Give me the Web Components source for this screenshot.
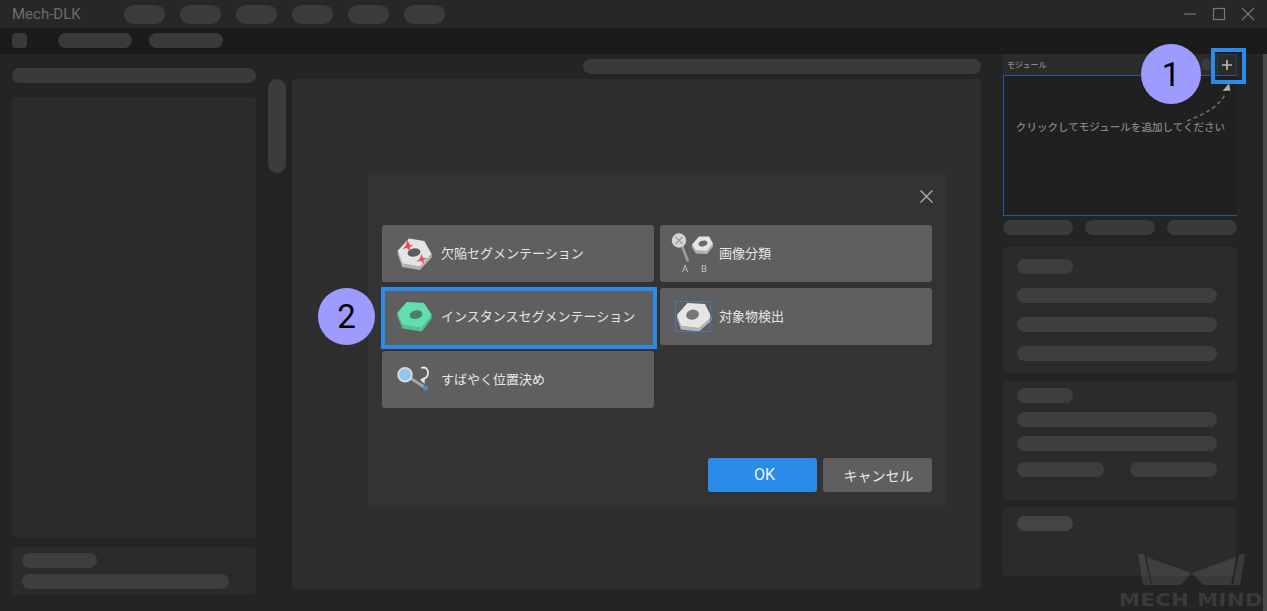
<!DOCTYPE html>
<html lang="ja">
<head>
<meta charset="utf-8">
<title>Mech-DLK</title>
<style>
    html, body {
        margin: 0;
        height: 100%;
        background: #242424;
        overflow: hidden;
        font-family: Roboto, "Noto Sans CJK JP", sans-serif;
    }
</style>
</head>
<body>
<app-shell></app-shell>
<script>
// top face of a hex nut + its extruded side, coordinates local to a 59x57 icon box
function nutSvg(pts, hole, top, side, holeFill, drop) {
    const p = pts.map(a => a.join(',')).join(' ');
    const low = pts.slice(0, 1).concat(pts.slice(4, 6).reverse(), pts.slice(3, 4));
    const lowPts = low.map(a => a.join(',')).join(' ');
    const lowDrop = low.slice().reverse().map(a => a[0] + ',' + (a[1] + drop)).join(' ');
    return `
        <polygon points="${lowPts} ${lowDrop}" fill="${side}"/>
        <polygon points="${p}" fill="${top}"/>
        <ellipse cx="${hole[0]}" cy="${hole[1]}" rx="${hole[2]}" ry="${hole[3]}" transform="rotate(-12 ${hole[0]} ${hole[1]})" fill="${holeFill}"/>
    `;
}

const ICONS = {
    defect: `<svg viewBox="0 0 59 57" width="59" height="57">
        ${nutSvg([[15.7,25.7],[27,13.5],[42.3,16],[49.7,29],[38,41.5],[20.3,38.5]], [32,27.5,6.5,4.2], '#e4e4e4', '#b4b4b4', '#5c5c5c', 3.5)}
        <path d="M25.5 15l2 4.500 3.500 1-3 1.500-.5 4-2.500-3-4.500 1 3-3z" fill="#e2525b"/>
        <path d="M39.500 28.500l1 4 4.500 1-3.500 1.500 .5 4-3-3-4.500 .5 3.500-3z" fill="#e2525b"/>
    </svg>`,
    classify: `<svg viewBox="0 0 59 57" width="59" height="57">
        <line x1="22" y1="21" x2="27.700" y2="35.500" stroke="#9a9a9a" stroke-width="2.800" stroke-linecap="round"/>
        <circle cx="19" cy="15.500" r="7.200" fill="#d4d4d4"/>
        <path d="M15.500 12l7 7m0-7l-7 7" stroke="#9b9b9b" stroke-width="1.200"/>
        ${nutSvg([[32,19.5],[39,11.5],[49,11.5],[53,18.5],[47,26],[36,25.5]], [43,18.500,4.500,2.800], '#e4e4e4', '#b2b2b2', '#6a6a6a', 3)}
        <text x="25" y="46.500" font-size="9.500" fill="#c4c4c4" text-anchor="middle" font-family="Roboto">A</text>
        <text x="44" y="46.500" font-size="9.500" fill="#c4c4c4" text-anchor="middle" font-family="Roboto">B</text>
    </svg>`,
    instance: `<svg viewBox="0 0 59 57" width="59" height="57">
        ${nutSvg([[15.3,24.7],[24.7,14],[42,15],[49.7,26.7],[39.7,40],[20.7,37]], [34,26.7,6.5,4.2], '#62dfae', '#4fc496', '#4b7e6a', 3.5)}
    </svg>`,
    detect: `<svg viewBox="0 0 59 57" width="59" height="57">
        ${nutSvg([[17,26.7],[27.5,15],[45,16],[51.5,29],[39,40],[21,38]], [32.5,26.7,6.500,5], '#e6e6e6', '#b4b4b4', '#777', 3.5)}
        <rect x="15.500" y="13.500" width="35" height="30" fill="none" stroke="#3f7ab8" stroke-width="1"/>
    </svg>`,
    locate: `<svg viewBox="0 0 59 57" width="59" height="57">
        <line x1="28" y1="27" x2="43" y2="36.500" stroke="#a6a6a6" stroke-width="3" stroke-linecap="round"/>
        <circle cx="43.500" cy="37" r="2.500" fill="#3f8fd4"/>
        <circle cx="23" cy="23.700" r="6.800" fill="#8fc6ef" stroke="#dcdcdc" stroke-width="1.800"/>
        <path d="M39 17c4-1.500 7 .5 7 5 0 3-2 5-4 6" fill="none" stroke="#e6e6e6" stroke-width="1.800"/>
        <path d="M38 28.500l5-2.500-.5 7z" fill="#e6e6e6"/>
    </svg>`
};

class XPill extends HTMLElement {
    constructor() {
        super();
        this.attachShadow({ mode: 'open' });
        this.shadowRoot.innerHTML = `
            <style>
                :host {
                    display: block;
                    flex: none;
                    height: 15px;
                    border-radius: 8px;
                    background: var(--pill, #3a3a3a);
                }
            </style>
        `;
    }
}

class XPanel extends HTMLElement {
    constructor() {
        super();
        this.attachShadow({ mode: 'open' });
        this.shadowRoot.innerHTML = `
            <style>
                :host {
                    display: flex;
                    flex-direction: column;
                    box-sizing: border-box;
                    background: #2b2b2b;
                    border-radius: 4px;
                    --pill: #3e3e3e;
                }
            </style>
            <slot></slot>
        `;
    }
}

class TitleBar extends HTMLElement {
    constructor() {
        super();
        this.attachShadow({ mode: 'open' });
        const menus = Array(6).fill('<x-pill class="menu"></x-pill>').join('');
        this.shadowRoot.innerHTML = `
            <style>
                :host {
                    display: flex;
                    align-items: center;
                    height: 28px;
                    padding: 0 11px 0 12px;
                    box-sizing: border-box;
                    background: #272727;
                }
                .name {
                    width: 112px;
                    font-size: 15px;
                    color: #6c6c6c;
                    white-space: nowrap;
                }
                .menus {
                    display: flex;
                    gap: 15px;
                }
                .menu {
                    width: 41px;
                    height: 19px;
                    border-radius: 10px;
                    --pill: #3b3b3b;
                }
                svg {
                    margin: -1px 0 0 auto;
                    display: block;
                }
            </style>
            <div class="name">Mech-DLK</div>
            <div class="menus">${menus}</div>
            <svg width="72" height="14" viewBox="0 0 72 14" fill="none" stroke="#777" stroke-width="1.200">
                <path d="M0 7h12"/>
                <rect x="29.500" y="1.500" width="11" height="11"/>
                <path d="M58 1l12 12m0-12L58 13"/>
            </svg>
        `;
    }
}

class ToolBar extends HTMLElement {
    constructor() {
        super();
        this.attachShadow({ mode: 'open' });
        this.shadowRoot.innerHTML = `
            <style>
                :host {
                    display: flex;
                    align-items: flex-start;
                    height: 26px;
                    padding: 5px 0 0 12px;
                    box-sizing: border-box;
                    background: #1b1b1b;
                }
                .square { width: 15px; border-radius: 4px; margin-right: 31px; }
                .tab { width: 74px; margin-right: 17px; }
            </style>
            <x-pill class="square"></x-pill>
            <x-pill class="tab"></x-pill>
            <x-pill class="tab"></x-pill>
        `;
    }
}

class LeftColumn extends HTMLElement {
    constructor() {
        super();
        this.attachShadow({ mode: 'open' });
        this.shadowRoot.innerHTML = `
            <style>
                :host {
                    display: flex;
                    flex-direction: column;
                    flex: none;
                    width: 244px;
                    padding: 14px 0 16px;
                    box-sizing: border-box;
                }
                .tree { flex: 1; margin-top: 14px; }
                .info {
                    height: 48px;
                    margin-top: 9px;
                    padding: 6px 10px;
                    gap: 6px;
                }
            </style>
            <x-pill></x-pill>
            <x-panel class="tree"></x-panel>
            <x-panel class="info">
                <x-pill style="width:75px"></x-pill>
                <x-pill style="width:207px"></x-pill>
            </x-panel>
        `;
    }
}

class CenterColumn extends HTMLElement {
    constructor() {
        super();
        this.attachShadow({ mode: 'open' });
        this.shadowRoot.innerHTML = `
            <style>
                :host {
                    display: flex;
                    flex-direction: column;
                    flex: none;
                    width: 689px;
                    margin-left: 6px;
                    padding: 5px 0 22px;
                    box-sizing: border-box;
                }
                .head { width: 398px; align-self: flex-end; margin-bottom: 5px; }
                .view { flex: 1; background: #2e2e2e; }
            </style>
            <x-pill class="head"></x-pill>
            <x-panel class="view"></x-panel>
        `;
    }
}

class ModuleColumn extends HTMLElement {
    constructor() {
        super();
        this.attachShadow({ mode: 'open' });
        this.shadowRoot.innerHTML = `
            <style>
                :host {
                    display: flex;
                    flex-direction: column;
                    flex: none;
                    width: 234px;
                    margin-left: 22px;
                    box-sizing: border-box;
                    font-family: "Noto Sans CJK JP", sans-serif;
                }
                .head {
                    display: flex;
                    align-items: center;
                    height: 21px;
                    padding-left: 4px;
                    box-sizing: border-box;
                    background: #2b2b2b;
                    font-size: 8px;
                    font-weight: 500;
                    color: #8c8c8c;
                }
                .head span { margin-top: -1px; }
                .head .dot {
                    width: 9px;
                    height: 11px;
                    margin-left: auto;
                    margin-right: 6px;
                    border-radius: 3px;
                    --pill: #3a3a3a;
                }
                .head .add {
                    width: 20px;
                    height: 21px;
                    display: flex;
                    align-items: center;
                    justify-content: center;
                    box-sizing: border-box;
                    border: 1px solid #1d4066;
                    border-bottom: 0;
                    background: #2b2b2b;
                }
                .canvas {
                    position: relative;
                    height: 141px;
                    padding-top: 43px;
                    box-sizing: border-box;
                    border: 1px solid #1f5a98;
                    border-right: 0;
                    background: #202020;
                    font-size: 10.500px;
                    font-weight: 500;
                    letter-spacing: .05px;
                    line-height: 16px;
                    color: #858585;
                    text-align: center;
                    white-space: nowrap;
                }
                .canvas svg {
                    position: absolute;
                    left: -1px;
                    top: -1px;
                }
                .tabs {
                    display: flex;
                    justify-content: space-between;
                    margin-top: 4px;
                }
                .tabs x-pill { width: 70px; }
                .p1 {
                    height: 126px;
                    margin-top: 12px;
                    padding: 12px 14px;
                    gap: 14px;
                }
                .p2 {
                    height: 119px;
                    margin-top: 8px;
                    padding: 7px 14px;
                    gap: 9px;
                }
                .p3 {
                    height: 69px;
                    margin: 7px 1px 0 -1px;
                    padding: 9px 15px;
                    --pill: #444;
                }
                .short { width: 56px; }
                .wide { width: 200px; }
                .pair {
                    display: flex;
                    justify-content: space-between;
                    width: 200px;
                    margin-top: 2px;
                }
                .pair x-pill { width: 87px; }
            </style>
            <div class="head">
                <span>モジュール</span>
                <x-pill class="dot"></x-pill>
                <div class="add">
                    <svg width="10" height="10" viewBox="0 0 10 10"><path d="M5 0v10M0 5h10" stroke="#b8b8b8" stroke-width="1.700"/></svg>
                </div>
            </div>
            <div class="canvas">
                クリックしてモジュールを追加してください
                <svg width="234" height="60" viewBox="0 0 234 60" fill="none">
                    <path d="M139 56H157M184 46C205 38 217 30 223 18" stroke="#6e6e6e" stroke-width="1.500" stroke-dasharray="4 3"/>
                    <path d="M219.500 16l8-.5-1.500-7z" fill="#b0b0b0"/>
                </svg>
            </div>
            <div class="tabs"><x-pill></x-pill><x-pill></x-pill><x-pill></x-pill></div>
            <x-panel class="p1">
                <x-pill class="short"></x-pill>
                <x-pill class="wide"></x-pill>
                <x-pill class="wide"></x-pill>
                <x-pill class="wide"></x-pill>
            </x-panel>
            <x-panel class="p2">
                <x-pill class="short"></x-pill>
                <x-pill class="wide"></x-pill>
                <x-pill class="wide"></x-pill>
                <div class="pair"><x-pill></x-pill><x-pill></x-pill></div>
            </x-panel>
            <x-panel class="p3">
                <x-pill class="short"></x-pill>
            </x-panel>
        `;
    }
}

class ModeButton extends HTMLElement {
    constructor() {
        super();
        this.attachShadow({ mode: 'open' });
    }

    connectedCallback() {
        const mark = this.hasAttribute('marked') ? '<div class="mark"></div>' : '';
        this.shadowRoot.innerHTML = `
            <style>
                :host {
                    display: flex;
                    align-items: center;
                    position: relative;
                    height: 57px;
                    padding-bottom: 2px;
                    box-sizing: border-box;
                    border-radius: 3px;
                    background: #5f5f5f;
                    font-size: 13px;
                    color: #e6e6e6;
                    white-space: nowrap;
                }
                svg { display: block; flex: none; align-self: flex-start; filter: blur(.3px); }
                .mark {
                    position: absolute;
                    left: -1px;
                    top: -1px;
                    right: -3px;
                    bottom: -4px;
                    border: 4px solid #2b8be8;
                }
            </style>
            ${ICONS[this.getAttribute('icon')]}
            <slot></slot>
            ${mark}
        `;
    }
}

class ModeDialog extends HTMLElement {
    constructor() {
        super();
        this.attachShadow({ mode: 'open' });
        this.shadowRoot.innerHTML = `
            <style>
                :host {
                    display: flex;
                    flex-direction: column;
                    position: absolute;
                    left: 368px;
                    top: 173px;
                    width: 578px;
                    height: 335px;
                    padding: 0 14px 16px;
                    box-sizing: border-box;
                    background: #333;
                    font-family: "Noto Sans CJK JP", sans-serif;
                }
                .close {
                    align-self: flex-end;
                    display: block;
                    margin: 17px -1px 22px 0;
                }
                .grid {
                    display: grid;
                    grid-template-columns: 272px 272px;
                    grid-auto-rows: 57px;
                    gap: 6px;
                }
                .actions {
                    display: flex;
                    justify-content: flex-end;
                    gap: 6px;
                    margin-top: auto;
                }
                .btn {
                    width: 109px;
                    height: 34px;
                    line-height: 34px;
                    padding-left: 2px;
                    box-sizing: border-box;
                    text-align: center;
                    border-radius: 3px;
                    font-size: 14px;
                    color: #e6e6e6;
                    background: #5f5f5f;
                }
                .ok {
                    padding-left: 4px;
                    background: #2b8be8;
                    color: #eef6ff;
                    font: 16px Roboto, sans-serif;
                    line-height: 34px;
                }
            </style>
            <svg class="close" width="13" height="13" viewBox="0 0 13 13"><path d="M.5.5l12 12m0-12l-12 12" stroke="#b4b4b4" stroke-width="1.200"/></svg>
            <div class="grid">
                <mode-button icon="defect">欠陥セグメンテーション</mode-button>
                <mode-button icon="classify">画像分類</mode-button>
                <mode-button icon="instance" marked>インスタンスセグメンテーション</mode-button>
                <mode-button icon="detect">対象物検出</mode-button>
                <mode-button icon="locate">すばやく位置決め</mode-button>
            </div>
            <div class="actions">
                <div class="btn ok">OK</div>
                <div class="btn">キャンセル</div>
            </div>
        `;
    }
}

class StepBadge extends HTMLElement {
    constructor() {
        super();
        this.attachShadow({ mode: 'open' });
        this.shadowRoot.innerHTML = `
            <style>
                :host {
                    display: flex;
                    align-items: center;
                    justify-content: center;
                    position: absolute;
                    border-radius: 50%;
                    background: #9e9bff;
                    color: #000;
                    font-family: Roboto, sans-serif;
                    font-size: 33px;
                }
            </style>
            <slot></slot>
        `;
    }
}

class MechWatermark extends HTMLElement {
    constructor() {
        super();
        this.attachShadow({ mode: 'open' });
        this.shadowRoot.innerHTML = `
            <style>
                :host {
                    display: flex;
                    flex-direction: column;
                    align-items: flex-start;
                    position: absolute;
                    left: 1119px;
                    top: 553px;
                    width: 146px;
                    pointer-events: none;
                    color: rgba(255, 255, 255, .1);
                }
                svg { display: block; margin-bottom: 7px; }
                span {
                    display: block;
                    font: bold 18.500px/14px "DejaVu Sans", sans-serif;
                    letter-spacing: .4px;
                    white-space: nowrap;
                    transform: scaleX(1.140);
                    transform-origin: 0 50%;
                }
            </style>
            <svg width="146" height="33" viewBox="0 0 146 33" fill="currentColor">
                <path d="M19 1h6l7 31h-8zM28 4l44 16-10 12H33zM126 1h-6l-6 31h7zM117 4L73 20l11 12h28z"/>
            </svg>
            <span>MECH MIND</span>
        `;
    }
}

class AppShell extends HTMLElement {
    constructor() {
        super();
        this.attachShadow({ mode: 'open' });
        this.shadowRoot.innerHTML = `
            <style>
                :host {
                    display: block;
                    position: relative;
                    width: 1267px;
                    height: 611px;
                    overflow: hidden;
                    background: #242424;
                }
                .main {
                    display: flex;
                    height: 557px;
                    padding-left: 12px;
                }
                .thumb {
                    flex: none;
                    width: 18px;
                    height: 94px;
                    margin: 25px 0 0 12px;
                    border-radius: 9px;
                    --pill: #3c3c3c;
                }
                .edge {
                    flex: none;
                    width: 4px;
                    margin-left: auto;
                    background: #4a4a4a;
                }
                .one { left: 1141px; top: 44px; width: 60px; height: 60px; }
                .two { left: 318px; top: 288px; width: 57px; height: 57px; }
                .plus-mark {
                    position: absolute;
                    left: 1211px;
                    top: 48px;
                    width: 35px;
                    height: 36px;
                    box-sizing: border-box;
                    border: 4px solid #2b8be8;
                }
            </style>
            <title-bar></title-bar>
            <tool-bar></tool-bar>
            <div class="main">
                <left-column></left-column>
                <x-pill class="thumb"></x-pill>
                <center-column></center-column>
                <module-column></module-column>
                <div class="edge"></div>
            </div>
            <mode-dialog></mode-dialog>
            <mech-watermark></mech-watermark>
            <div class="plus-mark"></div>
            <step-badge class="one">1</step-badge>
            <step-badge class="two">2</step-badge>
        `;
    }
}

customElements.define('x-pill', XPill);
customElements.define('x-panel', XPanel);
customElements.define('title-bar', TitleBar);
customElements.define('tool-bar', ToolBar);
customElements.define('left-column', LeftColumn);
customElements.define('center-column', CenterColumn);
customElements.define('module-column', ModuleColumn);
customElements.define('mode-button', ModeButton);
customElements.define('mode-dialog', ModeDialog);
customElements.define('step-badge', StepBadge);
customElements.define('mech-watermark', MechWatermark);
customElements.define('app-shell', AppShell);
</script>
</body>
</html>
